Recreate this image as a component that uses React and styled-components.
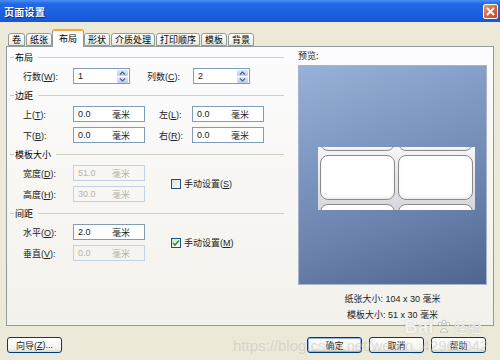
import React from "react";
import styled, { createGlobalStyle } from "styled-components";

const GlobalStyle = createGlobalStyle`
  html, body { margin: 0; padding: 0; background: #ECE9D8; }
  body {
    font-family: "Liberation Sans", "Noto Sans CJK SC", sans-serif;
    font-size: 9px;
    color: #000;
  }
  * { box-sizing: border-box; }
`;

const Window = styled.div`
  position: relative;
  width: 500px;
  height: 360px;
  overflow: hidden;
  background: #ECE9D8;
  display: flex;
  flex-direction: column;
`;

const TitleBar = styled.div`
  height: 22px;
  flex: none;
  display: flex;
  align-items: center;
  justify-content: space-between;
  padding: 0 2px 0 4px;
  background: linear-gradient(#4A8FF5 0%, #2268E6 18%, #1C60E0 60%, #1856D2 100%);
`;

const Title = styled.div`
  color: #fff;
  font-weight: bold;
  font-size: 10px;
  font-family: "Noto Sans CJK SC", sans-serif;
  text-shadow: 1px 1px 0 #0B2B8A;
  letter-spacing: 0.3px;
`;

const CloseBtn = styled.div`
  width: 15px;
  height: 15px;
  margin-top: 1px;
  border: 1px solid #fff;
  border-radius: 2px;
  background: linear-gradient(135deg, #EE9A7A 0%, #DE6A43 45%, #C8481F 100%);
  display: flex;
  align-items: center;
  justify-content: center;
`;

const Body = styled.div`
  flex: 1;
  display: flex;
  flex-direction: column;
  padding: 7px 6px 0 6px;
`;

const TabStrip = styled.div`
  height: 17px;
  display: flex;
  align-items: flex-end;
  gap: 1px;
  padding-left: 2px;
  position: relative;
  z-index: 1;
`;

const Tab = styled.div`
  height: ${(p) => (p.$active ? "18px" : "13px")};
  margin-bottom: ${(p) => (p.$active ? "-1px" : "0")};
  margin-left: ${(p) => (p.$active ? "-1px" : "0")};
  margin-right: ${(p) => (p.$active ? "-1px" : "0")};
  padding: ${(p) => (p.$active ? "2px 6px 0" : "0 3px")};
  border: 1px solid #919B9C;
  border-bottom: ${(p) => (p.$active ? "none" : "1px solid #919B9C")};
  border-top: ${(p) => (p.$active ? "2px solid #F2A93B" : "1px solid #919B9C")};
  border-radius: 3px 3px 0 0;
  background: ${(p) =>
    p.$active ? "#FCFCFE" : "linear-gradient(#FFFFFF, #F3F2EC 70%, #E6E4DA)"};
  display: flex;
  align-items: ${(p) => (p.$active ? "flex-start" : "center")};
  font-family: "Noto Sans CJK SC", sans-serif;
  font-size: 9px;
  line-height: 11px;
  white-space: nowrap;
`;

const Panel = styled.div`
  height: 280px;
  border: 1px solid #919B9C;
  background: linear-gradient(#FCFCFE, #F7F6F2 60%, #F2F1EC);
  display: flex;
  padding: 4px 6px 0 1px;
`;

const LeftCol = styled.div`
  width: 276px;
  display: flex;
  flex-direction: column;
  gap: 5px;
`;

const Group = styled.div`
  display: flex;
  flex-direction: column;
  gap: 5px;
`;

const GroupHeader = styled.div`
  height: 12px;
  display: flex;
  align-items: center;
  gap: 1px;
  font-family: "Noto Sans CJK SC", sans-serif;
`;

const Dash = styled.div`
  width: 4px;
  height: 1px;
  margin-left: 2px;
  background: #C8C8B8;
`;

const Rule = styled.div`
  flex: 1;
  height: 1px;
  margin-left: 4px;
  background: #D0D0BF;
`;

const Rows = styled.div`
  display: flex;
  flex-direction: column;
  gap: 5px;
`;

const Row = styled.div`
  height: 16px;
  display: flex;
  align-items: center;
  padding-left: ${(p) => p.$pad ?? 15}px;
`;

const Label = styled.div`
  width: ${(p) => p.$w}px;
  flex: none;
  white-space: nowrap;
  font-family: "Liberation Sans", "Noto Sans CJK SC", sans-serif;
  color: #222;
`;

const Field = styled.div`
  width: ${(p) => p.$w}px;
  height: 16px;
  flex: none;
  border: 1px solid ${(p) => (p.$disabled ? "#C3D2E2" : "#7F9DB9")};
  background: ${(p) => (p.$disabled ? "transparent" : "#fff")};
  color: ${(p) => (p.$disabled ? "#B5B2A6" : "#222")};
  display: flex;
  align-items: center;
  justify-content: space-between;
  padding: 0 14px 0 4px;
  font-family: "Liberation Sans", "Noto Sans CJK SC", sans-serif;
`;

const SpinField = styled(Field)`
  padding: 0 1px 0 4px;
`;

const Spinner = styled.div`
  display: flex;
  flex-direction: column;
  gap: 1px;
`;

const SpinBtn = styled.div`
  width: 11px;
  height: 6px;
  border-radius: 1px;
  background: linear-gradient(#DCE6FB, #B9CBF3);
  display: flex;
  align-items: center;
  justify-content: center;
`;

const WithCheck = styled.div`
  display: flex;
  align-items: center;
`;

const CheckWrap = styled.div`
  display: flex;
  align-items: center;
  gap: 3px;
  margin-left: 26px;
  font-family: "Liberation Sans", "Noto Sans CJK SC", sans-serif;
  color: #222;
`;

const Box = styled.div`
  width: 10px;
  height: 10px;
  border: 1px solid #1C5180;
  background: linear-gradient(135deg, #DCDCD7, #FFFFFF);
  display: flex;
  align-items: center;
  justify-content: center;
`;

const RightCol = styled.div`
  flex: 1;
  display: flex;
  flex-direction: column;
  padding-left: 14px;
`;

const PreviewTitle = styled.div`
  height: 12px;
  margin-top: -2px;
  margin-bottom: 4px;
  font-family: "Noto Sans CJK SC", sans-serif;
  color: #222;
`;

const PreviewBox = styled.div`
  width: 189px;
  height: 220px;
  border: 1px solid #A7B4C8;
  background: linear-gradient(160deg, #97B1D8 0%, #7F98C2 35%, #6B83AD 65%, #4E6590 100%);
  padding: 81px 0 0 19px;
`;

const Strip = styled.div`
  width: 157px;
  height: 63px;
  overflow: hidden;
  background: linear-gradient(#F6F6F8, #E6E6EA 50%, #D6D6DC);
  display: flex;
  flex-direction: column;
  gap: 4px;
  padding: 0 2px;
`;

const CardRow = styled.div`
  display: flex;
  gap: 3px;
  flex: none;
  margin-top: ${(p) => p.$offset || 0}px;
`;

const Card = styled.div`
  width: 75px;
  height: 45px;
  flex: none;
  background: #fff;
  border: 1px solid #8A8A8A;
  border-radius: 8px;
  box-shadow: inset 0 -2px 3px rgba(0, 0, 0, 0.08);
`;

const SizeInfo = styled.div`
  width: 189px;
  margin-top: 8px;
  display: flex;
  flex-direction: column;
  gap: 4px;
  align-items: center;
  font-family: "Liberation Sans", "Noto Sans CJK SC", sans-serif;
  color: #222;
  line-height: 12px;
`;

const ButtonRow = styled.div`
  margin-top: 11px;
  display: flex;
  gap: 7px;
  padding: 0 8px 0 1px;
`;

const Spacer = styled.div`
  flex: 1;
`;

const Button = styled.div`
  width: 55px;
  height: 16px;
  border: 1px solid #003C74;
  border-radius: 3px;
  background: linear-gradient(#FFFFFF, #F4F3EE 75%, #DDD8CC);
  box-shadow: ${(p) => (p.$default ? "inset 0 0 0 1px #8FB2EC" : "none")};
  display: flex;
  align-items: center;
  justify-content: center;
  font-family: "Liberation Sans", "Noto Sans CJK SC", sans-serif;
  color: #222;
`;

const UrlMark = styled.div`
  position: absolute;
  left: 233px;
  top: 337px;
  font-family: "Liberation Sans", sans-serif;
  font-size: 15px;
  color: rgba(195, 195, 195, 0.55);
  white-space: nowrap;
  pointer-events: none;
`;

const BaiduMark = styled.div`
  position: absolute;
  left: 404px;
  top: 316px;
  display: flex;
  align-items: center;
  gap: 2px;
  font-family: "Liberation Sans", "Noto Sans CJK SC", sans-serif;
  font-size: 19px;
  font-weight: bold;
  color: rgba(255, 255, 255, 0.85);
  text-shadow: 0 0 1px rgba(150, 150, 150, 0.7);
  pointer-events: none;
`;

const BaiduCjk = styled.span`
  font-size: 14px;
  font-weight: normal;
`;

const Up = () => (
  <svg width="7" height="4" viewBox="0 0 7 4">
    <path d="M1 3.5 L3.5 1 L6 3.5" fill="none" stroke="#4D6185" strokeWidth="1.2" />
  </svg>
);
const Down = () => (
  <svg width="7" height="4" viewBox="0 0 7 4">
    <path d="M1 0.5 L3.5 3 L6 0.5" fill="none" stroke="#4D6185" strokeWidth="1.2" />
  </svg>
);

const Spin = ({ value, w }) => (
  <SpinField $w={w}>
    <span>{value}</span>
    <Spinner>
      <SpinBtn><Up /></SpinBtn>
      <SpinBtn><Down /></SpinBtn>
    </Spinner>
  </SpinField>
);

const MM = ({ value, w = 72, disabled }) => (
  <Field $w={w} $disabled={disabled}>
    <span>{value}</span>
    <span>毫米</span>
  </Field>
);

const Check = ({ checked, children }) => (
  <CheckWrap>
    <Box>
      {checked && (
        <svg width="8" height="8" viewBox="0 0 8 8">
          <path d="M1 4 L3 6 L7 1.5" fill="none" stroke="#21A121" strokeWidth="1.6" />
        </svg>
      )}
    </Box>
    <span>{children}</span>
  </CheckWrap>
);

const Header = ({ children }) => (
  <GroupHeader>
    <Dash />
    <span>{children}</span>
    <Rule />
  </GroupHeader>
);

const tabs = ["卷", "纸张", "布局", "形状", "介质处理", "打印顺序", "模板", "背景"];

export default function App() {
  return (
    <>
      <GlobalStyle />
      <Window>
        <TitleBar>
          <Title>页面设置</Title>
          <CloseBtn>
            <svg width="9" height="9" viewBox="0 0 9 9">
              <path d="M1 1 L8 8 M8 1 L1 8" stroke="#fff" strokeWidth="1.8" />
            </svg>
          </CloseBtn>
        </TitleBar>
        <Body>
          <TabStrip>
            {tabs.map((t) => (
              <Tab key={t} $active={t === "布局"}>{t}</Tab>
            ))}
          </TabStrip>
          <Panel>
            <LeftCol>
              <Group>
                <Header>布局</Header>
                <Row>
                  <Label $w={50}>行数(<u>W</u>):</Label>
                  <Spin value="1" w={57} />
                  <Label $w={46} style={{ marginLeft: 17 }}>列数(<u>C</u>):</Label>
                  <Spin value="2" w={57} />
                </Row>
              </Group>
              <Group>
                <Header>边距</Header>
                <Rows>
                  <Row>
                    <Label $w={50}>上(<u>T</u>):</Label>
                    <MM value="0.0" />
                    <Label $w={33} style={{ marginLeft: 14 }}>左(<u>L</u>):</Label>
                    <MM value="0.0" />
                  </Row>
                  <Row>
                    <Label $w={50}>下(<u>B</u>):</Label>
                    <MM value="0.0" />
                    <Label $w={33} style={{ marginLeft: 14 }}>右(<u>R</u>):</Label>
                    <MM value="0.0" />
                  </Row>
                </Rows>
              </Group>
              <Group>
                <Header>模板大小</Header>
                <WithCheck>
                  <Rows>
                    <Row>
                      <Label $w={50}>宽度(<u>D</u>):</Label>
                      <MM value="51.0" disabled />
                    </Row>
                    <Row>
                      <Label $w={50}>高度(<u>H</u>):</Label>
                      <MM value="30.0" disabled />
                    </Row>
                  </Rows>
                  <Check>手动设置(<u>S</u>)</Check>
                </WithCheck>
              </Group>
              <Group>
                <Header>间距</Header>
                <WithCheck>
                  <Rows>
                    <Row>
                      <Label $w={50}>水平(<u>O</u>):</Label>
                      <MM value="2.0" />
                    </Row>
                    <Row>
                      <Label $w={50}>垂直(<u>V</u>):</Label>
                      <MM value="0.0" disabled />
                    </Row>
                  </Rows>
                  <Check checked>手动设置(<u>M</u>)</Check>
                </WithCheck>
              </Group>
            </LeftCol>
            <RightCol>
              <PreviewTitle>预览:</PreviewTitle>
              <PreviewBox>
                <Strip>
                  <CardRow $offset={-41}><Card /><Card /></CardRow>
                  <CardRow><Card /><Card /></CardRow>
                  <CardRow><Card /><Card /></CardRow>
                </Strip>
              </PreviewBox>
              <SizeInfo>
                <div>纸张大小: 104 x 30 毫米</div>
                <div>模板大小: 51 x 30 毫米</div>
              </SizeInfo>
            </RightCol>
          </Panel>
          <ButtonRow>
            <Button>向导(<u>Z</u>)...</Button>
            <Spacer />
            <Button $default>确定</Button>
            <Button>取消</Button>
            <Button>帮助</Button>
          </ButtonRow>
        </Body>
        <BaiduMark>
          <span>Bai</span>
          <svg width="16" height="16" viewBox="0 0 16 16">
            <g fill="none" stroke="rgba(160,160,160,0.6)" strokeWidth="1">
              <circle cx="4" cy="5" r="1.8" fill="rgba(255,255,255,0.85)" />
              <circle cx="8" cy="3" r="1.8" fill="rgba(255,255,255,0.85)" />
              <circle cx="12" cy="5" r="1.8" fill="rgba(255,255,255,0.85)" />
              <path d="M4 13 Q8 6 12 13 Z" fill="rgba(255,255,255,0.85)" />
            </g>
          </svg>
          <BaiduCjk>经验</BaiduCjk>
        </BaiduMark>
        <UrlMark>https://blog.csdn.net/weixin_42960042</UrlMark>
      </Window>
    </>
  );
}
